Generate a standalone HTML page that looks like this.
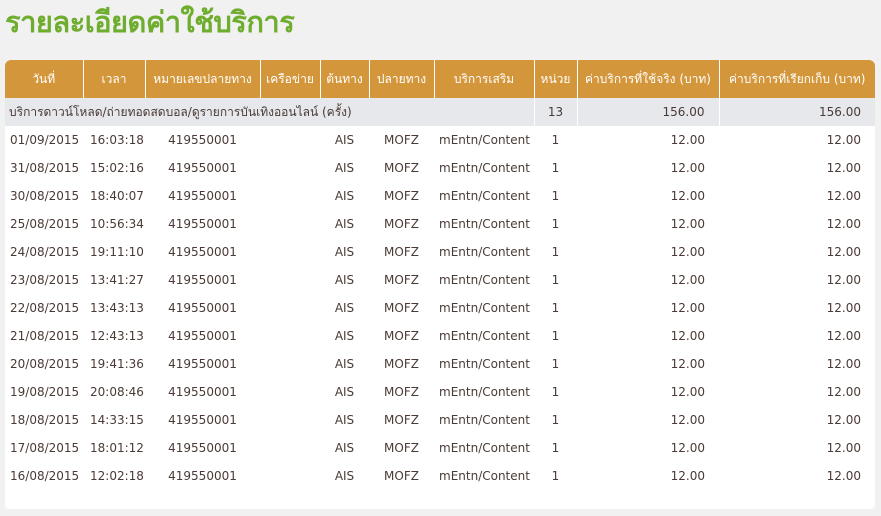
<!DOCTYPE html>
<html><head><meta charset="utf-8"><style>
body{margin:0;background:#f1f1f1;width:881px;height:516px;overflow:hidden;font-family:"DejaVu Sans","Liberation Sans","Noto Sans CJK SC",sans-serif;}
h1{position:absolute;left:5px;top:-1px;margin:0;font-size:29px;color:#6fad2e;font-weight:bold;font-family:"Liberation Sans","Noto Sans CJK SC",sans-serif;letter-spacing:-0.5px}
.panel{position:absolute;left:5px;top:60px;width:870px;height:449px;background:#fff;border-radius:6px 6px 4px 4px}
table{position:absolute;left:5px;top:60px;width:870px;border-collapse:collapse;font-size:12px;color:#4a3a35}
th{background:#d4963a;color:#fff;height:38px;padding:0;font-weight:normal;border-left:1px solid #fff;font-size:12px}
th:first-child{border-left:none;border-top-left-radius:6px}
th:last-child{border-top-right-radius:6px}
tr.sub td{background:#e6e8ec;height:28px;border-left:1px solid #fff}
tr.sub td:first-child{border-left:none;padding-left:4px}
td{height:28px;padding:0;white-space:nowrap}
td.t{padding-left:7px}
.c{text-align:center}.r{text-align:right;padding-right:14px}
</style></head><body>
<h1>รายละเอียดค่าใช้บริการ</h1>
<div class="panel"></div>
<table>
<colgroup><col style="width:78px"><col style="width:62px"><col style="width:115px"><col style="width:60px"><col style="width:49px"><col style="width:65px"><col style="width:100px"><col style="width:43px"><col style="width:142px"><col style="width:156px"></colgroup>
<tr><th>วันที่</th><th>เวลา</th><th>หมายเลขปลายทาง</th><th>เครือข่าย</th><th>ต้นทาง</th><th>ปลายทาง</th><th>บริการเสริม</th><th>หน่วย</th><th>ค่าบริการที่ใช้จริง (บาท)</th><th>ค่าบริการที่เรียกเก็บ (บาท)</th></tr>
<tr class="sub"><td colspan="7">บริการดาวน์โหลด/ถ่ายทอดสดบอล/ดูรายการบันเทิงออนไลน์ (ครั้ง)</td><td class="c">13</td><td class="r">156.00</td><td class="r">156.00</td></tr>
<tr><td style="padding-left:5px">01/09/2015</td><td class="t">16:03:18</td><td class="c">419550001</td><td></td><td class="c">AIS</td><td class="c">MOFZ</td><td style="padding-left:5px">mEntn/Content</td><td class="c">1</td><td class="r">12.00</td><td class="r">12.00</td></tr>
<tr><td style="padding-left:5px">31/08/2015</td><td class="t">15:02:16</td><td class="c">419550001</td><td></td><td class="c">AIS</td><td class="c">MOFZ</td><td style="padding-left:5px">mEntn/Content</td><td class="c">1</td><td class="r">12.00</td><td class="r">12.00</td></tr>
<tr><td style="padding-left:5px">30/08/2015</td><td class="t">18:40:07</td><td class="c">419550001</td><td></td><td class="c">AIS</td><td class="c">MOFZ</td><td style="padding-left:5px">mEntn/Content</td><td class="c">1</td><td class="r">12.00</td><td class="r">12.00</td></tr>
<tr><td style="padding-left:5px">25/08/2015</td><td class="t">10:56:34</td><td class="c">419550001</td><td></td><td class="c">AIS</td><td class="c">MOFZ</td><td style="padding-left:5px">mEntn/Content</td><td class="c">1</td><td class="r">12.00</td><td class="r">12.00</td></tr>
<tr><td style="padding-left:5px">24/08/2015</td><td class="t">19:11:10</td><td class="c">419550001</td><td></td><td class="c">AIS</td><td class="c">MOFZ</td><td style="padding-left:5px">mEntn/Content</td><td class="c">1</td><td class="r">12.00</td><td class="r">12.00</td></tr>
<tr><td style="padding-left:5px">23/08/2015</td><td class="t">13:41:27</td><td class="c">419550001</td><td></td><td class="c">AIS</td><td class="c">MOFZ</td><td style="padding-left:5px">mEntn/Content</td><td class="c">1</td><td class="r">12.00</td><td class="r">12.00</td></tr>
<tr><td style="padding-left:5px">22/08/2015</td><td class="t">13:43:13</td><td class="c">419550001</td><td></td><td class="c">AIS</td><td class="c">MOFZ</td><td style="padding-left:5px">mEntn/Content</td><td class="c">1</td><td class="r">12.00</td><td class="r">12.00</td></tr>
<tr><td style="padding-left:5px">21/08/2015</td><td class="t">12:43:13</td><td class="c">419550001</td><td></td><td class="c">AIS</td><td class="c">MOFZ</td><td style="padding-left:5px">mEntn/Content</td><td class="c">1</td><td class="r">12.00</td><td class="r">12.00</td></tr>
<tr><td style="padding-left:5px">20/08/2015</td><td class="t">19:41:36</td><td class="c">419550001</td><td></td><td class="c">AIS</td><td class="c">MOFZ</td><td style="padding-left:5px">mEntn/Content</td><td class="c">1</td><td class="r">12.00</td><td class="r">12.00</td></tr>
<tr><td style="padding-left:5px">19/08/2015</td><td class="t">20:08:46</td><td class="c">419550001</td><td></td><td class="c">AIS</td><td class="c">MOFZ</td><td style="padding-left:5px">mEntn/Content</td><td class="c">1</td><td class="r">12.00</td><td class="r">12.00</td></tr>
<tr><td style="padding-left:5px">18/08/2015</td><td class="t">14:33:15</td><td class="c">419550001</td><td></td><td class="c">AIS</td><td class="c">MOFZ</td><td style="padding-left:5px">mEntn/Content</td><td class="c">1</td><td class="r">12.00</td><td class="r">12.00</td></tr>
<tr><td style="padding-left:5px">17/08/2015</td><td class="t">18:01:12</td><td class="c">419550001</td><td></td><td class="c">AIS</td><td class="c">MOFZ</td><td style="padding-left:5px">mEntn/Content</td><td class="c">1</td><td class="r">12.00</td><td class="r">12.00</td></tr>
<tr><td style="padding-left:5px">16/08/2015</td><td class="t">12:02:18</td><td class="c">419550001</td><td></td><td class="c">AIS</td><td class="c">MOFZ</td><td style="padding-left:5px">mEntn/Content</td><td class="c">1</td><td class="r">12.00</td><td class="r">12.00</td></tr>
</table>
</body></html>
